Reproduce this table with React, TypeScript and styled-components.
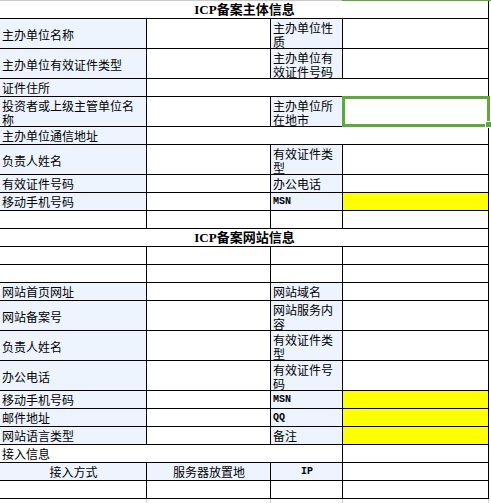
import React from "react";
import styled, { createGlobalStyle, css } from "styled-components";

const Global = createGlobalStyle`
  html, body { margin: 0; padding: 0; background: #fff; }
  body { font-family: "Noto Sans CJK SC", "Liberation Sans", sans-serif; color: #000; }
`;

type Tone = "label" | "plain" | "yellow";
type Kind = "text" | "title" | "code";

interface CellData {
  text?: string;
  span?: number;
  tone?: Tone;
  kind?: Kind;
  center?: boolean;
  selected?: boolean;
}

interface RowData {
  tall?: boolean;
  cells: CellData[];
}

const COLS = "146px 123px 71px 145px";

const Page = styled.div`
  width: 491px;
  display: flex;
  flex-direction: column;
`;

const TopEdge = styled.div`
  display: flex;
  height: 1px;
`;

const EdgeSegment = styled.div<{ $active?: boolean }>`
  height: 1px;
  flex: ${(p) => (p.$active ? "1 1 auto" : "0 0 342px")};
  background: ${(p) => (p.$active ? "#5fa83c" : "#c9c9c9")};
`;

const Sheet = styled.div`
  width: 488px;
  display: grid;
  grid-template-columns: ${COLS};
  column-gap: 1px;
  row-gap: 1px;
  background: #000;
  padding: 0 1px 1px 0;
`;

const toneColor: Record<Tone, string> = {
  label: "#edf4fe",
  plain: "#ffffff",
  yellow: "#ffff00",
};

const Cell = styled.div<{ $tall?: boolean; $span: number; $tone: Tone; $kind: Kind; $center?: boolean }>`
  position: relative;
  grid-column: span ${(p) => p.$span};
  height: ${(p) => (p.$tall ? "29px" : "17px")};
  background: ${(p) => toneColor[p.$tone]};
  display: flex;
  align-items: center;
  justify-content: ${(p) => (p.$center || p.$kind === "title" ? "center" : "flex-start")};
  padding: ${(p) => (p.$tall ? "2px 1px 0 2px" : "1px 1px 0 2px")};
  box-sizing: border-box;
  font-size: 12px;
  line-height: 14px;
  white-space: normal;
  word-break: break-all;
  ${(p) =>
    p.$kind === "title" &&
    css`
      font-family: "Liberation Serif", "Noto Sans CJK SC", serif;
      font-weight: 700;
      font-size: 13px;
    `}
  ${(p) =>
    p.$kind === "code" &&
    css`
      font-family: "Liberation Mono", monospace;
      font-weight: 700;
      font-size: 10px;
    `}
`;

const Selection = styled.div`
  position: absolute;
  top: -1px;
  left: -1px;
  right: -2px;
  bottom: -1px;
  border: 3px solid #5fa83c;
  pointer-events: none;
`;

const FillHandle = styled.div`
  position: absolute;
  right: -5px;
  bottom: -4px;
  width: 5px;
  height: 5px;
  background: #5fa83c;
  border: 1px solid #fff;
`;

const GhostRow = styled.div`
  width: 488px;
  display: grid;
  grid-template-columns: ${COLS};
  column-gap: 1px;
  background: #d4d4d4;
  padding-right: 1px;
  height: 20px;
`;

const GhostCell = styled.div`
  background: #fff;
`;

const L = (text: string, extra: Partial<CellData> = {}): CellData => ({ text, tone: "label", ...extra });
const P = (extra: Partial<CellData> = {}): CellData => ({ tone: "plain", ...extra });
const Y = (): CellData => ({ tone: "yellow" });
const blankRow = (): RowData => ({ cells: [P(), P(), P(), P()] });

const rows: RowData[] = [
  { cells: [{ text: "ICP备案主体信息", span: 4, kind: "title", tone: "plain" }] },
  { tall: true, cells: [L("主办单位名称"), P(), L("主办单位性质"), P()] },
  { tall: true, cells: [L("主办单位有效证件类型"), P(), L("主办单位有效证件号码"), P()] },
  { cells: [L("证件住所"), P({ span: 3 })] },
  { tall: true, cells: [L("投资者或上级主管单位名称"), P(), L("主办单位所在地市"), P({ selected: true })] },
  { cells: [L("主办单位通信地址"), P({ span: 3 })] },
  { tall: true, cells: [L("负责人姓名"), P(), L("有效证件类型"), P()] },
  { cells: [L("有效证件号码"), P(), L("办公电话"), P()] },
  { cells: [L("移动手机号码"), P(), L("MSN", { kind: "code" }), Y()] },
  blankRow(),
  { cells: [{ text: "ICP备案网站信息", span: 4, kind: "title", tone: "plain" }] },
  blankRow(),
  blankRow(),
  { cells: [L("网站首页网址"), P(), L("网站域名"), P()] },
  { tall: true, cells: [L("网站备案号"), P(), L("网站服务内容"), P()] },
  { tall: true, cells: [L("负责人姓名"), P(), L("有效证件类型"), P()] },
  { tall: true, cells: [L("办公电话"), P(), L("有效证件号码"), P()] },
  { cells: [L("移动手机号码"), P(), L("MSN", { kind: "code" }), Y()] },
  { cells: [L("邮件地址"), P(), L("QQ", { kind: "code" }), Y()] },
  { cells: [L("网站语言类型"), P(), L("备注"), Y()] },
  { cells: [{ text: "接入信息", span: 3, tone: "plain" }, P()] },
  {
    cells: [
      L("接入方式", { center: true }),
      L("服务器放置地", { center: true }),
      L("IP", { center: true, kind: "code" }),
      P(),
    ],
  },
  blankRow(),
];

export default function App() {
  return (
    <Page>
      <Global />
      <TopEdge>
        <EdgeSegment />
        <EdgeSegment $active />
      </TopEdge>
      <Sheet>
        {rows.map((row, ri) =>
          row.cells.map((c, ci) => (
            <Cell
              key={`${ri}-${ci}`}
              $tall={row.tall}
              $span={c.span ?? 1}
              $tone={c.tone ?? "plain"}
              $kind={c.kind ?? "text"}
              $center={c.center}
            >
              {c.text}
              {c.selected && (
                <Selection>
                  <FillHandle />
                </Selection>
              )}
            </Cell>
          ))
        )}
      </Sheet>
      <GhostRow>
        <GhostCell />
        <GhostCell />
        <GhostCell />
        <GhostCell />
      </GhostRow>
    </Page>
  );
}
